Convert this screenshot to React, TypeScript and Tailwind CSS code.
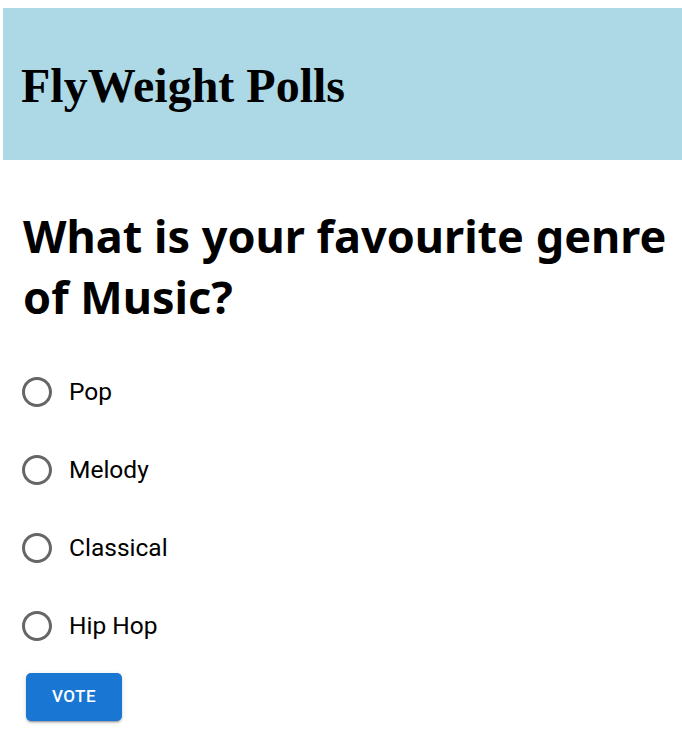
import { useState } from 'react'

const genres = ['Pop', 'Melody', 'Classical', 'Hip Hop']

const RadioCircle = ({ checked }: { checked: boolean }) => (
  <svg viewBox="0 0 24 24" className="w-[36px] h-[36px] text-[#666666]" fill="currentColor">
    <path d="M12 2C6.48 2 2 6.48 2 12s4.48 10 10 10 10-4.48 10-10S17.52 2 12 2zm0 18c-4.42 0-8-3.58-8-8s3.58-8 8-8 8 3.58 8 8-3.58 8-8 8z" />
    {checked && <circle cx="12" cy="12" r="5" />}
  </svg>
)

const App = () => {
  const [selected, setSelected] = useState('')

  return (
    <div className="w-full min-h-[744px] bg-white pt-[8px] pl-[3px]">
      {/* header */}
      <header className="bg-[#add8e6] h-[152px] pl-[18px] pt-[54px]">
        <h1 className="font-['Liberation_Serif',serif] font-bold text-[48px] leading-none text-black">
          FlyWeight Polls
        </h1>
      </header>

      <main className="pl-[20px] pt-[45px]">
        <h2 className="font-['Noto_Sans',sans-serif] font-bold text-[45px] leading-[61px] text-black">
          What is your favourite genre of Music?
        </h2>

        <div className="flex flex-col mt-[26px] -ml-[4px]">
          {genres.map((genre) => (
            <label
              key={genre}
              className="h-[78px] flex items-center cursor-pointer"
              onClick={() => setSelected(genre)}
            >
              <RadioCircle checked={selected === genre} />
              <span className="ml-[14px] font-['Roboto',sans-serif] text-[24.5px] text-black">
                {genre}
              </span>
            </label>
          ))}
        </div>

        <button className="mt-[8px] ml-[3px] w-[96px] h-[48px] rounded-[5px] bg-[#1976d2] text-white font-['Roboto',sans-serif] font-medium text-[17px] tracking-[0.03em] shadow-[0_3px_1px_-2px_rgba(0,0,0,0.2),0_2px_2px_0_rgba(0,0,0,0.14),0_1px_5px_0_rgba(0,0,0,0.12)]">
          VOTE
        </button>
      </main>
    </div>
  )
}

export default App
